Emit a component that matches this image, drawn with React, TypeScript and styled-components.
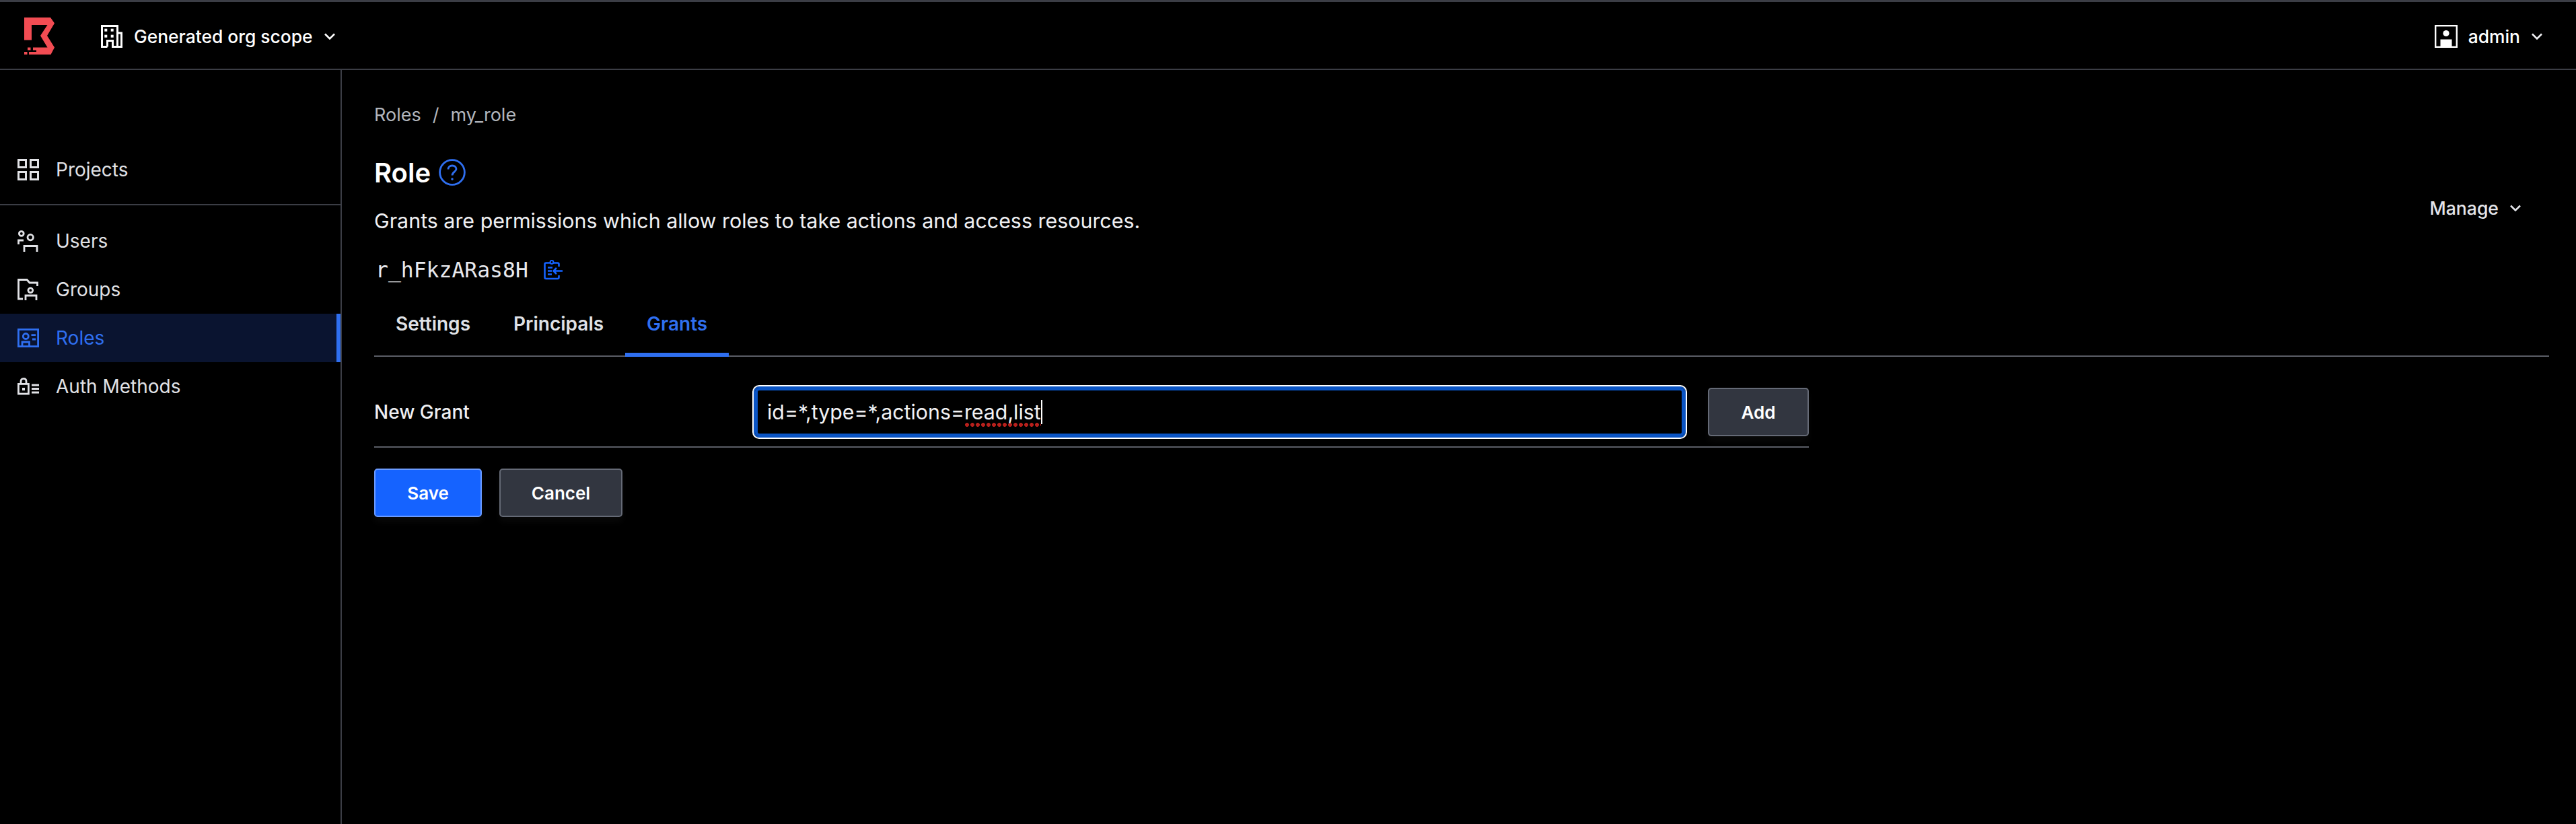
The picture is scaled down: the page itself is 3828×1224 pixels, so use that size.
import React from "react";
import styled, { createGlobalStyle } from "styled-components";

const GlobalStyle = createGlobalStyle`
    html, body {
        margin: 0;
        padding: 0;
        background: #000;
    }
    body {
        font-family: Inter, "Noto Sans", sans-serif;
        color: #fff;
    }
`;

const sideItems = [
    { label: "Users", icon: <UsersIcon /> },
    { label: "Groups", icon: <GroupsIcon /> },
    { label: "Roles", icon: <RolesIcon />, active: true },
    { label: "Auth Methods", icon: <AuthIcon /> },
];

function Logo() {
    return (
        <svg width="46" height="56" viewBox="0 0 46 56" fill="#f24c53">
            <path d="M0 0H39L45 8.5L34 27L45 44.5L39.5 55H7V51H18V48.5H13V44.5H34.5L24 27L34.5 11H11V33.5H0Z" />
            <rect x="5" y="44.5" width="4.5" height="4" />
            <rect x="0" y="51" width="4.5" height="4" />
        </svg>
    );
}

function BuildingIcon() {
    return (
        <svg width="32" height="34" viewBox="0 0 32 34" fill="none" stroke="#fff" strokeWidth="3">
            <path d="M9.5 32.5H1.5V1.5H24.5V32.5H17.5V23.5H9.5V32.5M24.5 12H30.5V32.5H24.5" />
            <g fill="#fff" stroke="none">
                <rect x="5.3" y="5.7" width="4" height="4" />
                <rect x="14.7" y="5.7" width="4" height="4" />
                <rect x="5.3" y="14.7" width="4" height="4" />
                <rect x="14.7" y="14.7" width="4" height="4" />
            </g>
        </svg>
    );
}

function Chevron() {
    return (
        <svg width="16" height="10" viewBox="0 0 16 10" fill="none" stroke="currentColor" strokeWidth="2.5">
            <path d="M1 1.5L8 8.5L15 1.5" />
        </svg>
    );
}

function AvatarIcon() {
    return (
        <svg width="34" height="34" viewBox="0 0 34 34" fill="#fff">
            <rect x="1.2" y="1.2" width="31.6" height="31.6" fill="none" stroke="#fff" strokeWidth="2.4" />
            <circle cx="17" cy="12.5" r="4.6" />
            <rect x="8.5" y="21.5" width="17" height="11" />
        </svg>
    );
}

function GridIcon() {
    return (
        <svg width="32" height="32" viewBox="0 0 32 32" fill="none" stroke="currentColor" strokeWidth="3">
            <rect x="1.5" y="1.5" width="11" height="11" />
            <rect x="19.5" y="1.5" width="11" height="11" />
            <rect x="1.5" y="19.5" width="11" height="11" />
            <rect x="19.5" y="19.5" width="11" height="11" />
        </svg>
    );
}

function UsersIcon() {
    return (
        <svg width="32" height="32" viewBox="0 0 32 32" fill="none" stroke="currentColor" strokeWidth="2.8">
            <circle cx="5.8" cy="5" r="3.4" />
            <circle cx="19.2" cy="10.6" r="4.2" />
            <path d="M1.5 21V15H9" />
            <path d="M10 32V23.5H29V32" />
        </svg>
    );
}

function GroupsIcon() {
    return (
        <svg width="32" height="32" viewBox="0 0 32 32" fill="none" stroke="currentColor" strokeWidth="2.8">
            <path d="M8 30H1.5V1.5H14L18 6H29.5V11" />
            <circle cx="19.3" cy="17.3" r="3.4" />
            <path d="M12 32V25H28V32" />
        </svg>
    );
}

function RolesIcon() {
    return (
        <svg width="32" height="28" viewBox="0 0 32 28" fill="none" stroke="currentColor" strokeWidth="2.8">
            <rect x="1.4" y="1.4" width="29.2" height="25.2" />
            <circle cx="12.3" cy="11.5" r="4" />
            <path d="M7 27V20H17.5V27" />
            <path d="M20.5 9.7H27M22 16H27" />
        </svg>
    );
}

function AuthIcon() {
    return (
        <svg width="32" height="26" viewBox="0 0 32 26" fill="none" stroke="currentColor" strokeWidth="2.8">
            <rect x="1.4" y="9.4" width="15" height="14.6" />
            <path d="M5 9V5.5C5 3 6.5 1.4 9 1.4C11.5 1.4 13 3 13 5.5V9" />
            <rect x="7" y="15" width="4" height="4" fill="currentColor" stroke="none" />
            <path d="M21 11H32M21 16.5H32M21 22H32" />
        </svg>
    );
}

function HelpIcon() {
    return (
        <svg width="40" height="40" viewBox="0 0 40 40" fill="none" stroke="#2f6ff0" strokeWidth="2.8">
            <circle cx="20" cy="20" r="18.4" />
            <path d="M14 15.5C14 12 16.5 10 20 10C23.5 10 26 12 26 15C26 19 20 19.5 20 24.5" />
            <circle cx="20" cy="30" r="1.8" fill="#2f6ff0" stroke="none" />
        </svg>
    );
}

function CopyIcon() {
    return (
        <svg width="28" height="30" viewBox="0 0 28 30" fill="none" stroke="#1563ff" strokeWidth="2.6">
            <path d="M22.5 10V6.5A2 2 0 0 0 20.5 4.5H3.5A2 2 0 0 0 1.5 6.5V26A2 2 0 0 0 3.5 28H20.5A2 2 0 0 0 22.5 26V23" />
            <circle cx="12" cy="3.5" r="2.4" fill="#000" strokeWidth="2" />
            <path d="M6 11.5H13M6 16.5H12M6 21.5H12" />
            <path d="M28 16.5H14.5M19 12L14.5 16.5L19 21" />
        </svg>
    );
}

export default function App() {
    return (
        <Page>
            <GlobalStyle />
            <Header>
                <HeaderLeft>
                    <LogoBox>
                        <Logo />
                    </LogoBox>
                    <Scope>
                        <BuildingIcon />
                        <ScopeName>Generated org scope</ScopeName>
                        <Chevron />
                    </Scope>
                </HeaderLeft>
                <UserMenu>
                    <AvatarIcon />
                    <UserName>admin</UserName>
                    <Chevron />
                </UserMenu>
            </Header>
            <Body>
                <Sidebar>
                    <ProjectsGroup>
                        <SideItem>
                            <GridIcon />
                            Projects
                        </SideItem>
                    </ProjectsGroup>
                    <SideGroup>
                        {sideItems.map((item) => (
                            <SideItem key={item.label} $active={item.active}>
                                <SideIcon>{item.icon}</SideIcon>
                                {item.label}
                            </SideItem>
                        ))}
                    </SideGroup>
                </Sidebar>
                <Main>
                    <Breadcrumb>
                        <span>Roles</span>
                        <Slash>/</Slash>
                        <span>my_role</span>
                    </Breadcrumb>
                    <TopRow>
                        <div>
                            <Title>
                                Role
                                <HelpIcon />
                            </Title>
                            <Description>
                                Grants are permissions which allow roles to take actions and access resources.
                            </Description>
                            <IdRow>
                                <IdText>r_hFkzARas8H</IdText>
                                <CopyIcon />
                            </IdRow>
                        </div>
                        <Manage>
                            Manage
                            <Chevron />
                        </Manage>
                    </TopRow>
                    <Tabs>
                        <Tab>Settings</Tab>
                        <Tab>Principals</Tab>
                        <Tab $active>Grants</Tab>
                    </Tabs>
                    <GrantRow>
                        <GrantLabel>New Grant</GrantLabel>
                        <GrantInput role="textbox">
                            id=*,type=*,actions=<Misspelled>read,list</Misspelled>
                            <Caret />
                        </GrantInput>
                        <Button $width={150}>Add</Button>
                    </GrantRow>
                    <Actions>
                        <Button $primary $width={160}>Save</Button>
                        <Button $width={183}>Cancel</Button>
                    </Actions>
                </Main>
            </Body>
        </Page>
    );
}

const Page = styled.div`
    width: 3828px;
    height: 1224px;
    display: flex;
    flex-direction: column;
    background: #000;
    overflow: hidden;
`;

const Header = styled.header`
    height: 104px;
    box-sizing: border-box;
    flex-shrink: 0;
    display: flex;
    align-items: center;
    justify-content: space-between;
    border-top: 3px solid #3b3d45;
    border-bottom: 2px solid #3b3d45;
    padding: 3px 50px 0 0;
`;

const HeaderLeft = styled.div`
    display: flex;
    align-items: center;
`;

const LogoBox = styled.div`
    display: flex;
    margin-left: 36px;
    width: 114px;
`;

const Scope = styled.div`
    display: flex;
    align-items: center;
    font-size: 26.4px;
    font-weight: 500;
    color: #fff;
`;

const ScopeName = styled.span`
    margin: 0 17px 0 17px;
`;

const UserMenu = styled.div`
    display: flex;
    align-items: center;
    color: #f0f0f3;
`;

const UserName = styled.span`
    margin: 0 17px 0 16px;
    font-size: 26.4px;
    font-weight: 500;
    color: #fff;
`;

const Body = styled.div`
    flex: 1;
    display: flex;
    min-height: 0;
`;

const Sidebar = styled.nav`
    width: 508px;
    box-sizing: border-box;
    flex-shrink: 0;
    border-right: 2px solid #3b3d45;
`;

const ProjectsGroup = styled.div`
    padding: 112px 0 15px;
    border-bottom: 2px solid #3b3d45;
`;

const SideGroup = styled.div`
    padding-top: 17px;
`;

const SideItem = styled.div<{ $active?: boolean }>`
    height: 72px;
    box-sizing: border-box;
    display: flex;
    align-items: center;
    gap: 25px;
    padding-left: 26px;
    font-size: 28px;
    color: ${(p) => (p.$active ? "#2f6ff0" : "#e1e2e6")};
    background: ${(p) => (p.$active ? "#0a1430" : "transparent")};
    border-right: ${(p) => (p.$active ? "6px solid #2f6ff0" : "none")};
`;

const SideIcon = styled.span`
    display: flex;
    width: 32px;
    justify-content: center;
`;

const Main = styled.main`
    flex: 1;
    min-width: 0;
    padding: 48px 40px 0 48px;
`;

const Breadcrumb = styled.div`
    height: 36px;
    display: flex;
    align-items: center;
    font-size: 27px;
    color: #b2b6bd;
`;

const Slash = styled.span`
    margin: 0 17px;
`;

const TopRow = styled.div`
    display: flex;
    justify-content: space-between;
    margin-top: 44px;
`;

const Title = styled.h1`
    margin: 0;
    height: 48px;
    display: flex;
    align-items: center;
    gap: 12px;
    font-size: 40px;
    font-weight: 600;
    color: #fff;
`;

const Description = styled.p`
    margin: 28px 0 0;
    font-size: 30.4px;
    line-height: 40px;
    color: #efeff2;
`;

const IdRow = styled.div`
    margin-top: 33px;
    height: 40px;
    display: flex;
    align-items: center;
    gap: 23px;
`;

const IdText = styled.span`
    padding-left: 2px;
    font-family: "DejaVu Sans Mono", monospace;
    font-size: 31.4px;
    color: #e8e9ed;
`;

const Manage = styled.div`
    align-self: flex-start;
    margin: 61px 42px 0 0;
    display: flex;
    align-items: center;
    gap: 17px;
    font-size: 26.6px;
    font-weight: 500;
    color: #e4e5ea;
`;

const Tabs = styled.div`
    margin-top: 17px;
    display: flex;
    border-bottom: 2px solid #5a5d66;
    height: 92px;
    box-sizing: border-box;
`;

const Tab = styled.div<{ $active?: boolean }>`
    height: 92px;
    box-sizing: border-box;
    padding: 0 32px ${(p) => (p.$active ? "0" : "6px")};
    display: flex;
    align-items: center;
    font-size: 28px;
    font-weight: 600;
    color: ${(p) => (p.$active ? "#2f6ff0" : "#dfe1e6")};
    border-bottom: ${(p) => (p.$active ? "6px solid #2f6ff0" : "none")};
`;

const GrantRow = styled.div`
    margin-top: 46px;
    width: 2132px;
    display: flex;
    align-items: center;
    padding-bottom: 15px;
    border-bottom: 2px solid #5a5d66;
`;

const GrantLabel = styled.label`
    width: 566px;
    font-size: 28px;
    font-weight: 500;
    color: #efeff2;
`;

const GrantInput = styled.div`
    width: 1381px;
    height: 72px;
    margin-right: 35px;
    box-sizing: border-box;
    display: flex;
    align-items: center;
    padding-left: 14px;
    font-size: 30.3px;
    color: #f2f2f4;
    border-radius: 6px;
    border: 4px solid #0a54c4;
    outline: 2px solid #fff;
    outline-offset: 2px;
    box-shadow: 0 0 0 2px #0a54c4;
`;

const Misspelled = styled.span`
    padding-bottom: 4px;
    margin-bottom: -4px;
    background: radial-gradient(circle at center, #b8201c 2.6px, transparent 3.2px) repeat-x left bottom / 8px 6px;
`;

const Caret = styled.span`
    width: 2px;
    height: 36px;
    background: #fff;
`;

const Button = styled.button<{ $primary?: boolean; $width: number }>`
    width: ${(p) => p.$width}px;
    height: 72px;
    box-sizing: border-box;
    padding: 0;
    font-family: inherit;
    font-size: 26px;
    font-weight: 600;
    color: #fff;
    background: ${(p) => (p.$primary ? "#1563ff" : "#323640")};
    border: 2px solid ${(p) => (p.$primary ? "#6b9bff" : "#656a76")};
    border-radius: 5px;
    box-shadow: 0 8px 10px rgba(255, 255, 255, 0.03);
`;

const Actions = styled.div`
    margin-top: 31px;
    display: flex;
    gap: 26px;
`;
